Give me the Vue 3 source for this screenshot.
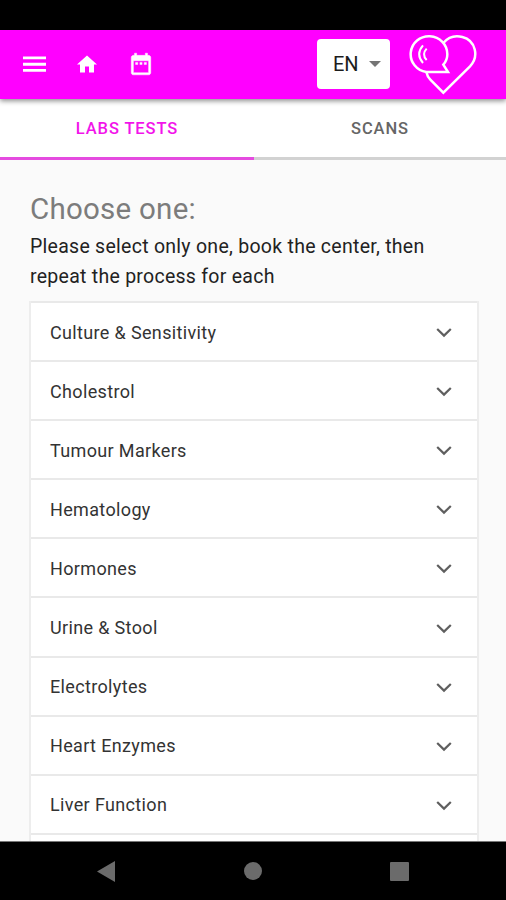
<script setup>
const tests = [
  'Culture & Sensitivity',
  'Cholestrol',
  'Tumour Markers',
  'Hematology',
  'Hormones',
  'Urine & Stool',
  'Electrolytes',
  'Heart Enzymes',
  'Liver Function',
]
</script>

<template>
  <div class="screen">
    <div class="status"></div>
    <header class="bar">
      <svg class="menu" viewBox="0 0 23 18"><path d="M0 2.9h23M0 9.2h23M0 15.4h23" stroke="#fff" stroke-width="2.9" /></svg>
      <svg class="home" viewBox="0 0 24 24"><path fill="#fff" d="M10 20.500v-6h4v6h5v-8h3L12 3.500 2 12.500h3v8z" /></svg>
      <svg class="calendar" viewBox="0 0 24 24"><path fill="#fff" stroke="#fff" stroke-width="0.400" fill-rule="evenodd" d="M19 4h-1V2h-2v2H8V2H6v2H5C3.900 4 3 4.900 3 6v14c0 1.100.9 2 2 2h14c1.100 0 2-.9 2-2V6c0-1.100-.9-2-2-2zm0 16H5V9h14zM7 10.500v2h2v-2zm4 0v2h2v-2zm4 0v2h2v-2z" /></svg>
      <button class="lang">
        <span>EN</span>
        <svg viewBox="0 0 12 6"><path d="M0 0h12L6 6z" fill="#757575" /></svg>
      </button>
      <svg class="logo" viewBox="28 20 204 182" fill="none" stroke="#fff" stroke-width="7.500" stroke-linejoin="miter">
        <path d="M143 81a55 54 0 1 0-63 53h65l-14-22q12-13 12-31z" />
        <path d="M131 47C147 28 169 24 188 29C228 39 239 88 211 117L131 196L92 157Q83 148 80 134" />
        <path d="M70 54Q47 80 70 107M81 64Q65 81 81 98" stroke-width="6" />
      </svg>
    </header>
    <nav class="tabs">
      <div class="tab active">LABS TESTS</div>
      <div class="tab">SCANS</div>
    </nav>
    <main class="content">
      <h1>Choose one:</h1>
      <p>Please select only one, book the center, then repeat the process for each</p>
      <div class="list">
        <div v-for="test in tests" :key="test" class="row">
          <span>{{ test }}</span>
          <svg viewBox="0 0 16 12"><path d="M1.200 3L8 9.600 14.800 3" fill="none" stroke="#5f5f5f" stroke-width="2.200" /></svg>
        </div>
        <div class="row"></div>
      </div>
    </main>
    <footer class="system">
      <svg class="back" viewBox="0 0 18 21"><path d="M18 0v21L0 10.500z" fill="#6b6b6b" /></svg>
      <span class="circle"></span>
      <span class="square"></span>
    </footer>
  </div>
</template>

<style>
body {
  margin: 0;
}
</style>

<style scoped>
.screen {
  width: 506px;
  height: 900px;
  display: flex;
  flex-direction: column;
  overflow: hidden;
  background: #fafafa;
  font-family: Roboto, "Liberation Sans", sans-serif;
}
.status {
  flex: 0 0 29.500px;
  background: #000;
}
.bar {
  flex: 0 0 69.500px;
  box-sizing: border-box;
  display: flex;
  align-items: center;
  padding-left: 23px;
  background: #f0f;
  box-shadow: 0 2px 5px rgba(0, 0, 0, 0.45);
  z-index: 1;
}
.menu {
  width: 23px;
  height: 18px;
}
.home {
  width: 24px;
  height: 24px;
  margin-left: 29px;
}
.calendar {
  width: 26px;
  height: 26px;
  margin-left: 29px;
}
.lang {
  width: 73px;
  height: 50px;
  margin-left: 163px;
  padding: 0 9px 0 16px;
  display: flex;
  align-items: center;
  justify-content: space-between;
  border: 0;
  border-radius: 4px;
  background: #fff;
  color: #1c1c1c;
  font: 400 20px Roboto, sans-serif;
}
.lang svg {
  width: 12px;
  height: 6px;
}
.logo {
  width: 68px;
  height: 60.700px;
  margin-left: 19.300px;
}
.tabs {
  flex: 0 0 61px;
  display: flex;
  background: #fff;
}
.tab {
  flex: 1;
  box-sizing: border-box;
  padding-top: 19px;
  border-bottom: 3px solid #d2d2d2;
  text-align: center;
  font-size: 16.500px;
  font-weight: 500;
  line-height: 22px;
  letter-spacing: 0.900px;
  color: #666;
}
.tab.active {
  flex: 0 0 254px;
  color: #f214ea;
  border-color: #e54be0;
}
.content {
  flex: 1;
  min-height: 0;
  overflow: hidden;
  padding: 31px 27px 0 29px;
}
h1 {
  margin: 0 0 0 1px;
  font-size: 29.500px;
  font-weight: 400;
  line-height: 36px;
  letter-spacing: 0.250px;
  color: #7c7c7c;
}
p {
  margin: 5px 0 10px 1px;
  width: 420px;
  font-size: 19.500px;
  line-height: 29.500px;
  letter-spacing: 0.270px;
  color: #222;
}
.list {
  border: 2px solid #ededed;
  border-top: 0;
  background: #fff;
}
.row {
  box-sizing: border-box;
  height: 59.100px;
  border-top: 2px solid #e9e9e9;
  padding: 1px 25px 0 19px;
  display: flex;
  align-items: center;
  justify-content: space-between;
  font-size: 18px;
  letter-spacing: 0.350px;
  color: #333;
}
.row svg {
  width: 16px;
  height: 12px;
}
.system {
  flex: 0 0 59px;
  box-sizing: border-box;
  border-top: 1px solid #777;
  padding: 0 97px;
  display: flex;
  align-items: center;
  justify-content: space-between;
  background: #000;
}
.back {
  width: 18px;
  height: 21px;
}
.circle {
  width: 18px;
  height: 18px;
  border-radius: 50%;
  background: #6b6b6b;
}
.square {
  width: 19px;
  height: 19px;
  border-radius: 1px;
  background: #6b6b6b;
}
</style>
